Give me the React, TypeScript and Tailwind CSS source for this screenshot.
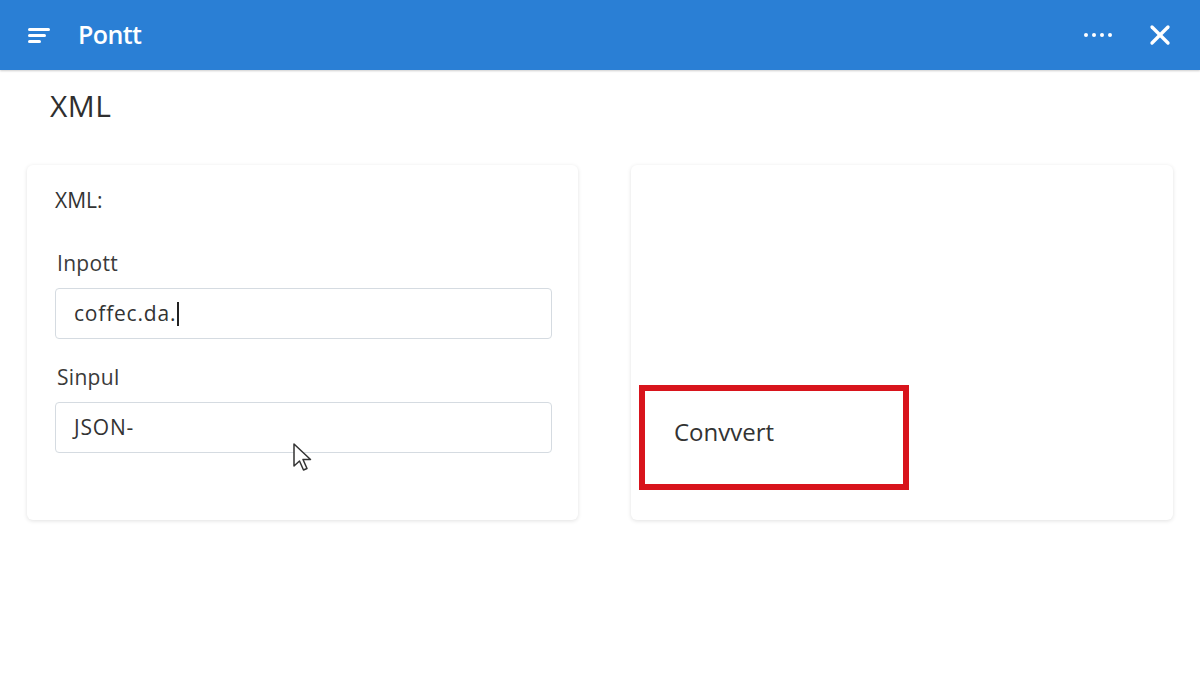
import { X } from 'lucide-react';

function MenuIcon() {
  return (
    <svg width="24" height="18" viewBox="0 0 24 18" fill="none">
      <rect x="1" y="2" width="22" height="3" rx="1.5" fill="#fff" />
      <rect x="1" y="8" width="18" height="3" rx="1.5" fill="#fff" />
      <rect x="1" y="14" width="13" height="3" rx="1.5" fill="#fff" />
    </svg>
  );
}

function Cursor() {
  return (
    <svg width="22" height="30" viewBox="0 0 22 30" className="absolute left-[292px] top-[443px]">
      <path
        d="M2 1 L2 23 L7.5 18 L11.5 27 L15 25.5 L11 16.5 L18.5 16.5 Z"
        fill="#fff"
        stroke="#333"
        strokeWidth="1.5"
        strokeLinejoin="round"
      />
    </svg>
  );
}

function Field({ label, value, caret }: { label: string; value: string; caret?: boolean }) {
  return (
    <div>
      <div className="ml-[2px] text-[21px] tracking-[0.3px] text-[#3a3a3a] mb-[12px] leading-[26px]">{label}</div>
      <div className="h-[51px] w-[497px] rounded-[4px] border border-[#d5dbe1] flex items-center px-[18px] text-[21px] tracking-[0.8px] text-[#333]">
        {value}
        {caret && <span className="ml-[1px] inline-block h-[24px] w-[2px] bg-[#222]" />}
      </div>
    </div>
  );
}

export default function App() {
  return (
    <div className="relative w-[1200px] h-[675px] bg-white overflow-hidden" style={{ fontFamily: '"Open Sans", "Noto Sans", sans-serif' }}>
      <header className="h-[70px] bg-[#2a7fd5] flex items-center px-[27px] text-white shadow-[0_1px_2px_rgba(0,0,0,0.2)]">
        <MenuIcon />
        <span className="ml-[27px] text-[25px] font-semibold tracking-tight">Pontt</span>
        <div className="ml-auto flex items-center gap-[32px]">
          <div className="flex gap-[4px]">
            <span className="h-[4px] w-[4px] rounded-full bg-white" />
            <span className="h-[4px] w-[4px] rounded-full bg-white" />
            <span className="h-[4px] w-[4px] rounded-full bg-white" />
            <span className="h-[4px] w-[4px] rounded-full bg-white" />
          </div>
          <X className="h-[32px] w-[32px] -mr-[3px]" strokeWidth={2.5} />
        </div>
      </header>

      <main className="px-[27px]">
        <h1 className="ml-[23px] mt-[18px] text-[30px] text-[#2f2f2f] leading-[36px] tracking-[0.5px]">XML</h1>

        <div className="mt-[41px] flex gap-[53px]">
          <section className="w-[551px] h-[355px] rounded-[6px] bg-white shadow-[0_1px_4px_rgba(0,0,0,0.12)] px-[28px] pt-[21px]">
            <div className="text-[21px] text-[#333] leading-[28px]">XML:</div>
            <div className="mt-[36px] flex flex-col gap-[25px]">
              <Field label="Inpott" value="coffec.da." caret />
              <Field label="Sinpul" value="JSON-" />
            </div>
          </section>

          <section className="w-[542px] h-[355px] rounded-[6px] bg-white shadow-[0_1px_4px_rgba(0,0,0,0.12)] px-[8px] pt-[220px]">
            <div className="w-[270px] h-[105px] border-[6px] border-[#d8141c] pl-[29px] pt-[25px] text-[24px] leading-[32px] text-[#333]">
              Convvert
            </div>
          </section>
        </div>
      </main>

      <Cursor />
    </div>
  );
}
